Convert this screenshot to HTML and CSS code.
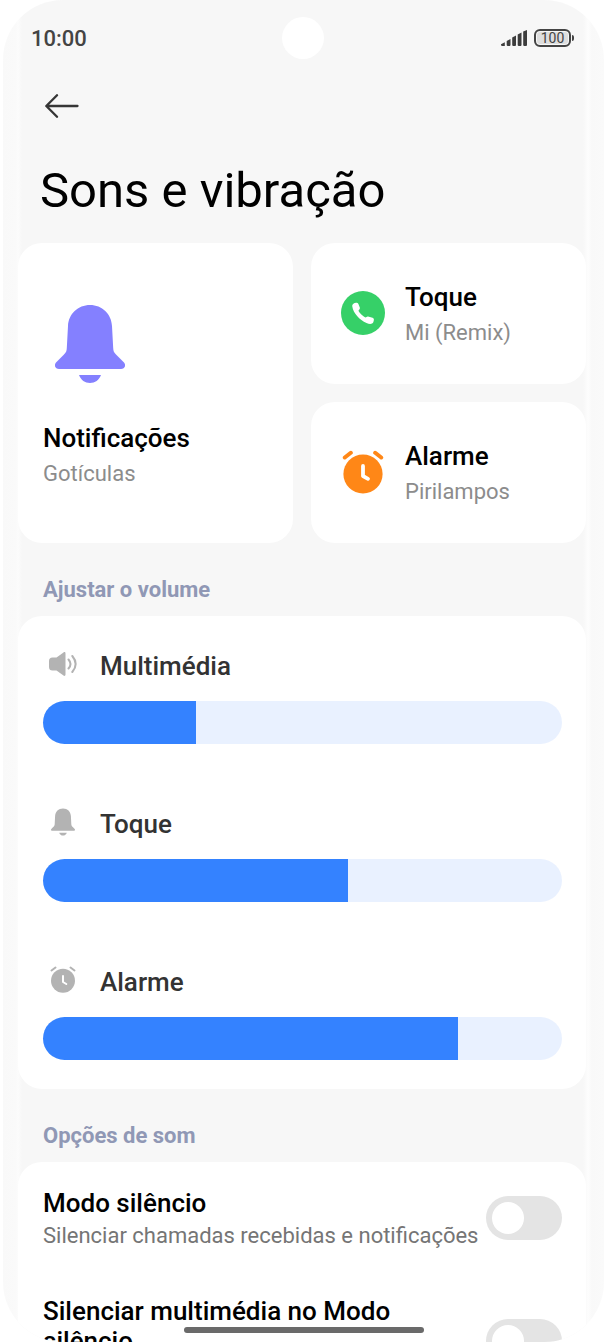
FILE: index.html
```html
<!DOCTYPE html>
<html lang="pt">
<head>
<meta charset="utf-8">
<meta name="viewport" content="width=device-width, initial-scale=1">
<title>Sons e vibração</title>
<link rel="stylesheet" href="styles.css">
</head>
<body>
<div class="screen">
  <header class="status">
    <span class="time">10:00</span>
    <span class="camera"></span>
    <span class="indicators">
      <svg class="signal" viewBox="0 0 26 17" aria-hidden="true">
        <g fill="#3d3d3d">
          <path d="M0 14.3L3.8 12.2V16H1.4Q0 16 0 15z"/>
          <path d="M5.700 11L9.500 9V15.2L8.8 16H6.5L5.700 15.2z"/>
          <path d="M11.2 7.600L15 5.600V15.2L14.3 16H12L11.2 15.2z"/>
          <path d="M16.700 4.400L20.500 2.400V15.2L19.8 16H17.500L16.700 15.2z"/>
          <path d="M22.2 1.500L26 0V15.2L25.3 16H23L22.2 15.2z"/>
        </g>
      </svg>
      <span class="battery">100</span>
    </span>
  </header>

  <button class="back" type="button" aria-label="Voltar">
    <svg viewBox="0 0 34 24" aria-hidden="true"><path d="M32.500 12H1.500M12 1.200L1.300 12L12 22.800" fill="none" stroke="#363636" stroke-width="2.300" stroke-linecap="round" stroke-linejoin="round"/></svg>
  </button>
  <h1 class="title">Sons e vibração</h1>

  <main>
    <div class="tiles">
      <button class="tile tile-large" type="button">
        <svg class="icon-bell" viewBox="0 0 70 78" aria-hidden="true">
          <path fill="#8480ff" d="M35 0C47 0 56.500 9 57 21L58.200 43C58.300 46 59 47.500 61 49.500L69 57.500C71.500 60.500 69.500 64 66 64H4C.5 64-1.500 60.500 1 57.500L9 49.500C11 47.500 11.700 46 11.800 43L13 21C13.500 9 23 0 35 0zM24 70H46C44.200 75 40 78 35 78C30 78 25.800 75 24 70z"/>
        </svg>
        <span class="tile-text"><span class="name">Notificações</span><span class="value">Gotículas</span></span>
      </button>
      <button class="tile" type="button">
        <svg class="icon-tile" viewBox="0 0 44 44" aria-hidden="true">
          <circle cx="22" cy="22" r="22" fill="#36d068"/>
          <path fill="#fff" d="M12.400 12.800C14 11.300 16.800 11.400 17.500 13.200L18.800 16.500C19.300 18 18 18.600 17.500 19.600C17.100 20.600 22.500 26.200 24.500 26.400C25.500 26.400 25.700 25.300 27 25.500L31.600 26.800C33.500 27.500 33 29.500 32.300 31.200C31.300 33.300 28.500 33.300 25.500 32C18.500 29 12.200 22 11.300 15.500C11.200 14.200 11.500 13.500 12.400 12.800z"/>
        </svg>
        <span class="tile-text"><span class="name">Toque</span><span class="value">Mi (Remix)</span></span>
      </button>
      <button class="tile" type="button">
        <svg class="icon-tile" viewBox="0 0 44 44" aria-hidden="true">
          <g fill="none" stroke="#ff8717" stroke-width="4" stroke-linecap="round"><path d="M3.800 7.500L9.800 2.800M40.200 7.500L34.200 2.800"/></g>
          <circle cx="22" cy="24" r="19.600" fill="#ff8717"/>
          <path d="M22 16V26L27 28.800" fill="none" stroke="#fff" stroke-width="3.800" stroke-linecap="round" stroke-linejoin="round"/>
        </svg>
        <span class="tile-text"><span class="name">Alarme</span><span class="value">Pirilampos</span></span>
      </button>
    </div>

    <h2 class="section">Ajustar o volume</h2>
    <section class="card volumes">
      <div class="volume">
        <label for="media">
          <svg class="icon-small" viewBox="0 0 30 30" aria-hidden="true">
            <path fill="#b3b3b3" d="M4.500 8.500H8.500L15.500 3.400C16.500 2.800 17.500 3.200 17.500 4.400V25.600C17.500 26.800 16.500 27.200 15.500 26.600L8.500 21.500H4.500Q1 21.500 1 18V12Q1 8.500 4.500 8.500z"/>
            <path d="M20.500 10.500Q24.500 15 20.500 19.500M24.300 7Q31 15 24.300 23" fill="none" stroke="#b3b3b3" stroke-width="2" stroke-linecap="round"/>
          </svg>Multimédia</label>
        <input class="slider" id="media" type="range" min="0" max="200" value="59" style="--level: 29.5%">
      </div>
      <div class="volume">
        <label for="ring">
          <svg class="icon-small" viewBox="0 0 30 30" aria-hidden="true">
            <path fill="#b3b3b3" d="M15 1.500C19.500 1.500 22.700 4.500 22.900 9L23.300 17C23.400 18.500 23.800 19.200 24.800 20.100L26.700 22C27.500 23 27 23.700 26 23.700H4C3 23.700 2.500 23 3.300 22L5.200 20.100C6.200 19.200 6.600 18.500 6.700 17L7.100 9C7.300 4.500 10.500 1.500 15 1.500zM11.200 25.700H18.800C18.200 27.600 16.800 28.500 15 28.500C13.200 28.500 11.800 27.600 11.200 25.700z"/>
          </svg>Toque</label>
        <input class="slider" id="ring" type="range" min="0" max="200" value="118" style="--level: 58.8%">
      </div>
      <div class="volume">
        <label for="alarm">
          <svg class="icon-small" viewBox="0 0 30 30" aria-hidden="true">
            <path d="M3.500 5.500L7.500 2.500M26.500 5.500L22.500 2.500" fill="none" stroke="#b3b3b3" stroke-width="2" stroke-linecap="round"/>
            <circle cx="15" cy="15.800" r="12" fill="#b3b3b3"/>
            <path d="M15 11V17L18.300 19" fill="none" stroke="#fff" stroke-width="2" stroke-linecap="round" stroke-linejoin="round"/>
          </svg>Alarme</label>
        <input class="slider" id="alarm" type="range" min="0" max="200" value="160" style="--level: 80%">
      </div>
    </section>

    <h2 class="section">Opções de som</h2>
    <section class="card options">
      <div class="option">
        <label for="silent"><span class="name">Modo silêncio</span><span class="hint">Silenciar chamadas recebidas e notificações</span></label>
        <input class="toggle" id="silent" type="checkbox" role="switch">
      </div>
      <div class="option option-tall">
        <label for="mute"><span class="name">Silenciar multimédia no Modo silêncio</span></label>
        <input class="toggle" id="mute" type="checkbox" role="switch">
      </div>
    </section>
  </main>
  <div class="home-bar"></div>
</div>
</body>
</html>
```
FILE: styles.css
```css
* { box-sizing: border-box; }

body {
  margin: 0;
  background: #fff;
  font-family: Roboto, "Noto Sans", sans-serif;
  color: #000;
}

button {
  border: 0;
  font: inherit;
  color: inherit;
  text-align: left;
}

.screen {
  position: relative;
  height: 100vh;
  margin: 0 1px 0 3px;
  padding: 0 18px 0 15px;
  overflow: hidden;
  border-radius: 60px;
  background: linear-gradient(to right,
    #f9f9f9 0, #fafafa 13px, #fcfcfc 15px, #f7f7f7 19px,
    #f7f7f7 calc(100% - 21px), #fdfdfd calc(100% - 16px),
    #f9f9f9 calc(100% - 12px), #fafafa 100%);
}

.status {
  display: grid;
  grid-template-columns: 1fr 42px 1fr;
  align-items: center;
  height: 76px;
  padding: 0 12px 0 13px;
  color: #444;
}

.time {
  font-size: 22px;
  font-weight: 500;
}

.camera {
  height: 42px;
  border-radius: 50%;
  background: #fff;
}

.indicators {
  display: flex;
  align-items: center;
  justify-content: flex-end;
  gap: 7px;
  padding-right: 3px;
}

.signal {
  width: 26px;
  height: 17px;
}

.battery {
  position: relative;
  width: 37px;
  height: 18px;
  border: 2px solid #444;
  border-radius: 6px;
  background: #dedede;
  box-shadow: inset 0 0 0 1px #f7f7f7;
  font-size: 14px;
  font-weight: 400;
  line-height: 15px;
  text-align: center;
}

.battery::after {
  content: "";
  position: absolute;
  top: 4px;
  right: -5px;
  width: 2px;
  height: 6px;
  border-radius: 0 2px 2px 0;
  background: #444;
}

.back {
  display: block;
  margin: 18px 0 0 27px;
  padding: 0;
  background: none;
}

.back svg {
  display: block;
  width: 34px;
  height: 24px;
}

.title {
  margin: 43px 0 0;
  padding: 0 22px;
  font-size: 49px;
  font-weight: 400;
  line-height: 60px;
}

.tiles {
  display: grid;
  grid-template-columns: 1fr 1fr;
  grid-template-rows: 141px 141px;
  gap: 18px;
  margin-top: 22px;
}

.tile {
  display: flex;
  align-items: center;
  gap: 20px;
  padding: 3px 30px 0;
  border-radius: 24px;
  background: #fff;
}

.tile-large {
  grid-row: span 2;
  flex-direction: column;
  align-items: flex-start;
  justify-content: flex-start;
  gap: 40px;
  padding: 62px 25px 0;
}

.icon-bell {
  width: 70px;
  height: 78px;
  margin-left: 12px;
}

.icon-tile {
  width: 44px;
  height: 44px;
  margin-bottom: 4px;
}

.tile-text,
.option label {
  display: flex;
  flex-direction: column;
  gap: 6px;
}

.name {
  font-size: 26px;
  font-weight: 500;
  line-height: 30px;
}

.value {
  font-size: 22px;
  line-height: 30px;
  color: #8c8c8c;
}

.section {
  margin: 0;
  padding: 32px 25px 11px;
  font-size: 22px;
  font-weight: 700;
  line-height: 30px;
  color: #9098b5;
}

.card {
  border-radius: 24px;
  background: #fff;
}

.volumes {
  display: flex;
  flex-direction: column;
  gap: 60px;
  padding: 30px 24px 29px 25px;
}

.volume {
  display: flex;
  flex-direction: column;
  gap: 15px;
}

.volume label {
  display: flex;
  align-items: center;
  gap: 22px;
  padding-left: 5px;
  font-size: 26px;
  font-weight: 500;
  line-height: 40px;
  color: #333;
}

.icon-small {
  width: 30px;
  height: 30px;
  margin-bottom: 4px;
}

.slider {
  width: 100%;
  height: 43px;
  margin: 0;
  appearance: none;
  border-radius: 22px;
  background: linear-gradient(to right, #3482ff var(--level), #e9f1ff var(--level));
}

.slider::-webkit-slider-thumb {
  appearance: none;
  width: 1px;
  height: 43px;
  background: transparent;
}

.options {
  display: flex;
  flex-direction: column;
  gap: 48px;
  padding: 26px 24px 26px 25px;
}

.option {
  display: flex;
  align-items: center;
  justify-content: space-between;
  gap: 4px;
}

.option-tall { min-height: 90px; }

.option-tall label {
  align-self: flex-start;
  max-width: 400px;
}

.hint {
  font-size: 22px;
  line-height: 24px;
  color: #757575;
}

.toggle {
  flex: none;
  width: 76px;
  height: 44px;
  margin: 0;
  padding: 6px;
  appearance: none;
  border-radius: 22px;
  background: #e4e4e4;
}

.toggle::before {
  content: "";
  display: block;
  width: 32px;
  height: 32px;
  border-radius: 50%;
  background: #fff;
}

.toggle:checked { background: #3482ff; }
.toggle:checked::before { margin-left: auto; }

.home-bar {
  position: absolute;
  bottom: 9px;
  left: 50%;
  width: 240px;
  height: 6px;
  margin-left: -120px;
  border-radius: 3px;
  background: #6a6a6a;
}
```
